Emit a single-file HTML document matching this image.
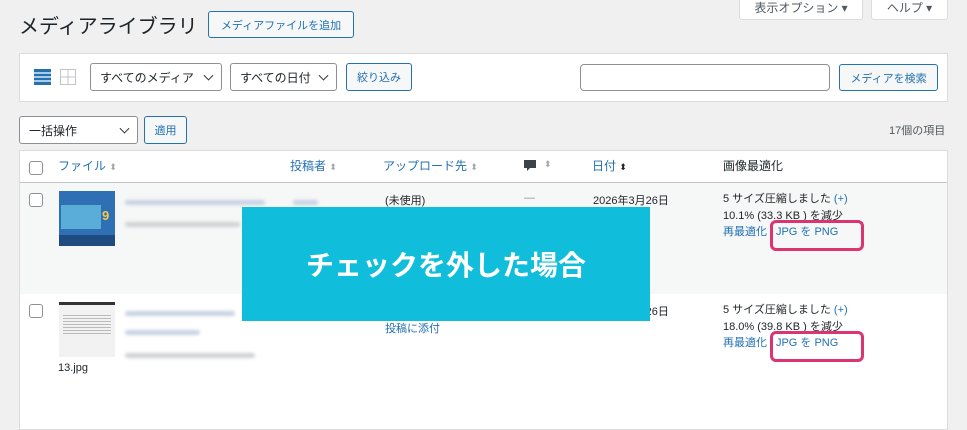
<!DOCTYPE html>
<html><head><meta charset="utf-8"><style>
*{box-sizing:border-box;margin:0;padding:0}
body{width:967px;height:421px;overflow:hidden;background:#f0f0f1;font-family:"Liberation Sans","Noto Sans CJK JP",sans-serif;color:#1d2327;position:relative;font-size:11px}
.a{position:absolute}
.btn{position:absolute;border:1px solid #2271b1;border-radius:3px;color:#2271b1;background:#f6f7f7;font-size:11px;display:flex;align-items:center;justify-content:center}
.sel{position:absolute;border:1px solid #8c8f94;border-radius:3px;background:#fff;font-size:12px;display:flex;align-items:center;padding-left:9px}
.sel:after{content:"";position:absolute;right:9px;top:50%;width:6px;height:6px;border-right:1.5px solid #333;border-bottom:1.5px solid #333;transform:translateY(-70%) rotate(45deg)}
.blue{color:#2271b1}
.cb{position:absolute;width:14px;height:14px;border:1px solid #8c8f94;border-radius:3px;background:#fff}
.blur{position:absolute;height:5px;border-radius:3px;background:#c7d2e3;filter:blur(1.5px)}
.hl{position:absolute;border:3px solid #dc3470;border-radius:6px}
</style></head><body>
<div class="a" style="left:19px;top:10px;font-size:20px;color:#1d2327">メディアライブラリ</div>
<div class="btn" style="left:208px;top:11px;width:146px;height:27px;">メディアファイルを追加</div>
<div class="a" style="left:739px;top:-6px;width:124px;height:26px;background:#fff;border:1px solid #dcdcde;border-radius:3px;font-size:12px;color:#50575e;display:flex;align-items:center;justify-content:center">表示オプション ▾</div>
<div class="a" style="left:871px;top:-6px;width:77px;height:26px;background:#fff;border:1px solid #dcdcde;border-radius:3px;font-size:12px;color:#50575e;display:flex;align-items:center;justify-content:center">ヘルプ ▾</div>

<div class="a" style="left:19px;top:53px;width:929px;height:49px;background:#fff;border:1px solid #dcdcde"></div>
<svg class="a" style="left:34px;top:69px" width="17" height="16"><rect x="0" y="0" width="17" height="16" fill="#2271b1"/><g stroke="#fff" stroke-width="1.2"><line x1="0" y1="4" x2="17" y2="4"/><line x1="0" y1="8" x2="17" y2="8"/><line x1="0" y1="12" x2="17" y2="12"/></g></svg>
<svg class="a" style="left:60px;top:69px" width="16" height="16"><rect x="0.5" y="0.5" width="15" height="15" fill="none" stroke="#c3c4c7"/><line x1="8" y1="0" x2="8" y2="16" stroke="#c3c4c7"/><line x1="0" y1="8" x2="16" y2="8" stroke="#c3c4c7"/></svg>
<div class="sel" style="left:90px;top:63px;width:132px;height:28px">すべてのメディア</div>
<div class="sel" style="left:230px;top:63px;width:107px;height:28px">すべての日付</div>
<div class="btn" style="left:346px;top:63px;width:66px;height:28px">絞り込み</div>
<div class="a" style="left:580px;top:64px;width:250px;height:27px;background:#fff;border:1px solid #8c8f94;border-radius:4px"></div>
<div class="btn" style="left:839px;top:64px;width:99px;height:27px">メディアを検索</div>

<div class="sel" style="left:19px;top:116px;width:119px;height:28px">一括操作</div>
<div class="btn" style="left:144px;top:116px;width:43px;height:28px">適用</div>
<div class="a" style="left:889px;top:122px;font-size:11px;color:#50575e">17個の項目</div>

<div class="a" style="left:19px;top:150px;width:929px;height:280px;background:#fff;border:1px solid #dcdcde"></div>
<div class="a" style="left:20px;top:182px;width:927px;height:1px;background:#c3c4c7"></div>
<div class="a" style="left:20px;top:183px;width:927px;height:111px;background:#f6f7f7"></div>
<div class="cb" style="left:29px;top:161px"></div>
<div class="a blue" style="left:58px;top:157px;font-size:12px">ファイル <span style="color:#a7aaad;font-size:9px">⬍</span></div>
<div class="a blue" style="left:290px;top:157px;font-size:12px">投稿者 <span style="color:#a7aaad;font-size:9px">⬍</span></div>
<div class="a blue" style="left:383px;top:157px;font-size:12px">アップロード先 <span style="color:#a7aaad;font-size:9px">⬍</span></div>
<svg class="a" style="left:523px;top:159px" width="14" height="14"><path d="M1 1h12v8H7l-3 3v-3H1z" fill="#3c434a"/></svg>
<div class="a" style="left:544px;top:159px;color:#a7aaad;font-size:9px">⬍</div>
<div class="a blue" style="left:592px;top:157px;font-size:12px">日付 <span style="color:#1d2327;font-size:9px">⬍</span></div>
<div class="a" style="left:723px;top:157px;font-size:12px">画像最適化</div>

<div class="cb" style="left:29px;top:193px"></div>
<div class="a" style="left:59px;top:191px;width:56px;height:55px;background:#2f6fb4"><div style="position:absolute;left:2px;top:14px;width:40px;height:24px;background:#6ec7e8;opacity:.7"></div><div class="a" style="left:43px;top:17px;color:#f7c948;font-weight:bold;font-size:13px">9</div><div class="a" style="left:0;top:44px;width:56px;height:11px;background:#1e4b80"></div></div>
<div class="blur" style="left:125px;top:200px;width:140px"></div>
<div class="blur" style="left:293px;top:200px;width:25px"></div>
<div class="blur" style="left:125px;top:222px;width:115px;background:#cfd1d4"></div>
<div class="a" style="left:385px;top:192px;font-size:11px">(未使用)</div>
<div class="a" style="left:524px;top:192px;color:#8c8f94">—</div>
<div class="a" style="left:593px;top:192px;font-size:11px">2026年3月26日</div>
<div class="a" style="left:723px;top:191px;font-size:11px;line-height:16.5px">5 サイズ圧縮しました <span class="blue">(+)</span><br>10.1% (33.3 KB ) を減少<br><span class="blue">再最適化 | JPG を PNG</span></div>
<div class="hl" style="left:770px;top:220px;width:94px;height:31px"></div>

<div class="cb" style="left:29px;top:304px"></div>
<div class="a" style="left:59px;top:302px;width:56px;height:55px;background:#f2f2f2;border-top:3px solid #333"><div style="margin:10px 4px;height:20px;background:repeating-linear-gradient(#bbb 0 1px,transparent 1px 3px)"></div></div>
<div class="a" style="left:58px;top:362px;font-size:11px">13.jpg</div>
<div class="blur" style="left:125px;top:311px;width:110px"></div>
<div class="blur" style="left:125px;top:330px;width:75px"></div>
<div class="blur" style="left:125px;top:353px;width:130px;background:#cfd1d4"></div>
<div class="a blue" style="left:385px;top:320px;font-size:11px">投稿に添付</div>
<div class="a" style="left:593px;top:303px;font-size:11px">2026年3月26日</div>
<div class="a" style="left:723px;top:302px;font-size:11px;line-height:16.5px">5 サイズ圧縮しました <span class="blue">(+)</span><br>18.0% (39.8 KB ) を減少<br><span class="blue">再最適化 | JPG を PNG</span></div>
<div class="hl" style="left:770px;top:331px;width:94px;height:31px"></div>

<div class="a" style="left:242px;top:207px;width:408px;height:114px;background:#10bedc;color:#fff;font-weight:bold;font-size:28px;display:flex;align-items:center;justify-content:center">チェックを外した場合</div>
</body></html>
